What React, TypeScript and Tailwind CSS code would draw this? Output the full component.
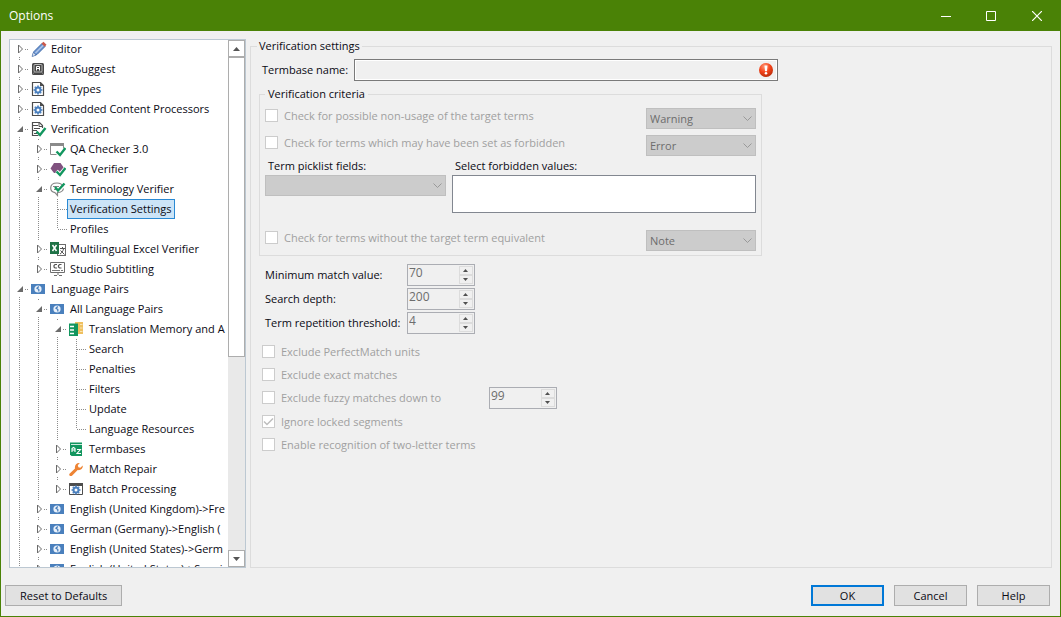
import { useState } from "react";
import type { ReactNode } from "react";

type IconName =
  | "pencil"
  | "key"
  | "file"
  | "verify"
  | "qa"
  | "tag"
  | "term"
  | "excel"
  | "cc"
  | "lang"
  | "memory"
  | "termbase"
  | "wrench"
  | "batch";

interface TreeRow {
  id: string;
  label: string;
  depth: number;
  icon?: IconName;
  state?: "open" | "closed";
  first?: boolean;
  last?: boolean;
}

const TREE: TreeRow[] = [
  { id: "editor", label: "Editor", depth: 0, icon: "pencil", state: "closed", first: true },
  { id: "autosuggest", label: "AutoSuggest", depth: 0, icon: "key", state: "closed" },
  { id: "filetypes", label: "File Types", depth: 0, icon: "file", state: "closed" },
  { id: "embedded", label: "Embedded Content Processors", depth: 0, icon: "file", state: "closed" },
  { id: "verification", label: "Verification", depth: 0, icon: "verify", state: "open" },
  { id: "qa", label: "QA Checker 3.0", depth: 1, icon: "qa", state: "closed" },
  { id: "tag", label: "Tag Verifier", depth: 1, icon: "tag", state: "closed" },
  { id: "terminology", label: "Terminology Verifier", depth: 1, icon: "term", state: "open" },
  { id: "settings", label: "Verification Settings", depth: 2 },
  { id: "profiles", label: "Profiles", depth: 2, last: true },
  { id: "excel", label: "Multilingual Excel Verifier", depth: 1, icon: "excel", state: "closed" },
  { id: "subtitling", label: "Studio Subtitling", depth: 1, icon: "cc", state: "closed", last: true },
  { id: "pairs", label: "Language Pairs", depth: 0, icon: "lang", state: "open" },
  { id: "allpairs", label: "All Language Pairs", depth: 1, icon: "lang", state: "open" },
  { id: "memory", label: "Translation Memory and A", depth: 2, icon: "memory", state: "open" },
  { id: "search", label: "Search", depth: 3 },
  { id: "penalties", label: "Penalties", depth: 3 },
  { id: "filters", label: "Filters", depth: 3 },
  { id: "update", label: "Update", depth: 3 },
  { id: "resources", label: "Language Resources", depth: 3, last: true },
  { id: "termbases", label: "Termbases", depth: 2, icon: "termbase", state: "closed" },
  { id: "repair", label: "Match Repair", depth: 2, icon: "wrench", state: "closed" },
  { id: "batch", label: "Batch Processing", depth: 2, icon: "batch", state: "closed", last: true },
  { id: "en-fr", label: "English (United Kingdom)->Fre", depth: 1, icon: "lang", state: "closed" },
  { id: "de-en", label: "German (Germany)->English (", depth: 1, icon: "lang", state: "closed" },
  { id: "en-de", label: "English (United States)->Germ", depth: 1, icon: "lang", state: "closed" },
  { id: "en-es", label: "English (United States)->Spani", depth: 1, icon: "lang", state: "closed" },
];

function Gear({ cx, cy }: { cx: number; cy: number }) {
  return (
    <g transform={`translate(${cx} ${cy})`} stroke="#4a7fbd">
      <circle r="2.5" fill="none" strokeWidth="2" />
      <path
        d="M0-3V-4.500M0 3V4.500M-3 0H-4.500M3 0H4.500M-2.200-2.200L-3.200-3.200M2.200 2.200L3.200 3.200M-2.200 2.200L-3.200 3.200M2.200-2.200L3.200-3.200"
        strokeWidth="1.600"
      />
    </g>
  );
}

function Tick() {
  return <path d="M6.500 10.500l3.500 3.500 5.500-7" fill="none" stroke="#12965f" strokeWidth="2.400" />;
}

const ICONS: Record<IconName, ReactNode> = {
  pencil: (
    <>
      <path d="M1.500 15L3 10.500 11 2.500l3 3L6 13.500z" fill="#6f97d2" stroke="#3f6aa8" />
      <path d="M4.500 12L12.500 4" stroke="#dbe7f7" />
      <path d="M10.500 2.500L12.500 .8l3 3-1.800 2z" fill="#c9594c" />
      <path d="M1 15.500l1.300-4 2.700 2.700z" fill="#e9edf5" stroke="#3f6aa8" strokeWidth=".6" />
    </>
  ),
  key: (
    <>
      <rect x="1" y="2" width="12" height="12" rx="1.500" fill="#474747" />
      <rect x="3" y="3.500" width="8" height="7.500" rx="1" fill="#474747" stroke="#d5d5d5" strokeWidth=".8" />
      <path d="M5.500 9.500V5.500h3v4M5.500 7.500h3" fill="none" stroke="#fff" />
      <path d="M1.500 13.500l2-2.500M12.500 13.500l-2-2.500" stroke="#999" strokeWidth=".8" />
    </>
  ),
  file: (
    <>
      <path d="M1.500 1.500h8l3 3v10h-11z" fill="#fff" stroke="#4d4d4d" strokeWidth="1.200" />
      <path d="M9 1v4h4z" fill="#4d4d4d" />
      <Gear cx={7} cy={9} />
    </>
  ),
  verify: (
    <>
      <path d="M11.500 7V4.500L8.500 1.500h-7v13h6" fill="#fff" stroke="#4d4d4d" strokeWidth="1.200" />
      <path d="M8 1.500v4h3.500" fill="none" stroke="#4d4d4d" />
      <path d="M1 4.500h6M3 7.500h6M1 9.500h5M3 12.500h3" stroke="#4d4d4d" />
      <path d="M5.500 10.500l3.500 3.500 5.500-7" fill="none" stroke="#12965f" strokeWidth="2.400" />
    </>
  ),
  qa: (
    <>
      <path d="M.5 4.500v9h6M13.500 4.500v3" fill="none" stroke="#8a8a8a" />
      <rect x="0" y="2" width="14" height="3" fill="#8a8a8a" />
      <Tick />
    </>
  ),
  tag: (
    <>
      <path d="M4 2h6.500l3.500 5-2.500 5H4L.5 7.500z" fill="#80527f" />
      <path d="M6.500 10l3.500 3.500 5-6" fill="none" stroke="#fff" strokeWidth="3.600" />
      <Tick />
    </>
  ),
  term: (
    <>
      <path
        d="M13 5.500C12 3 9.500 2 7 2 3.200 2 .7 4 .7 7c0 2.500 2 4.200 4.300 4.700L7.500 14.500v-3c3 0 5.500-1.500 6-4"
        fill="none"
        stroke="#858585"
        strokeWidth="1.200"
      />
      <path d="M3 5.500h6M4 8.500h3" stroke="#858585" />
      <path d="M5 6l3 3.500 6.500-7" fill="none" stroke="#12965f" strokeWidth="2.400" />
    </>
  ),
  excel: (
    <>
      <rect x="7.500" y="3.500" width="8" height="11" fill="#fff" stroke="#6b6b6b" />
      <path d="M10 7.500h5M12.500 6V7.500M10 13c2-1 3-3 3.500-5M10.500 9.500l4 4" fill="none" stroke="#555" />
      <path d="M0 1h9v12H0z" fill="#1f7246" />
      <path d="M2.500 4l4 6M6.500 4l-4 6" stroke="#fff" strokeWidth="1.500" />
    </>
  ),
  cc: (
    <>
      <path d="M.5 1.500h14v10H.5z" fill="#fff" stroke="#6e6e6e" />
      <path d="M7 3.500H5l-1 1v1.500l1 1h2M11.500 3.500h-2l-1 1v1.500l1 1h2" fill="none" stroke="#555" strokeWidth="1.200" />
      <path d="M2 9.500h8M11 9.500h2" stroke="#777" />
      <path d="M4 14.500h3M9 14.500h3M7 13h2" stroke="#6e6e6e" />
    </>
  ),
  lang: (
    <>
      <rect x="0" y="3" width="14" height="10" fill="#4a80bd" />
      <circle cx="7" cy="8" r="3.600" fill="#e8f0fa" />
      <path d="M7.800 5.500L6 7.200l1.800 1.300v2" fill="none" stroke="#4a80bd" strokeWidth="1.300" />
    </>
  ),
  memory: (
    <>
      <path d="M6 1h8v12H6z" fill="#efc060" />
      <path d="M11 3.500h2.500M11 7h2.500M11 10.500h2.500" stroke="#f9e5b5" />
      <path d="M0 2.500h9V15H0z" fill="#12965f" />
      <path d="M1 5.500h4M1 9h4M1 12.500h4" stroke="#fff" strokeWidth="1.400" />
    </>
  ),
  termbase: (
    <>
      <path d="M1 1.500h12V15H2.500L1 13.500z" fill="#12965f" />
      <path d="M2 3.500h11" stroke="#fff" strokeWidth=".8" />
      <path d="M3 11V7.500l1.500-1L6 7.500V11M3 9h3M8 8.500h3.500L8 12.500h4" fill="none" stroke="#fff" strokeWidth="1.100" />
    </>
  ),
  wrench: (
    <path
      d="M.5 12.800L6 7.500C5.300 4.500 7.500 1.500 10.800 2L8.800 4.200l.6 2 2 .5L13.700 4.500c.6 3-2 5.200-5 4.600L3 14.800c-1.500 1-3.500-.5-2.500-2z"
      fill="#ee8434"
    />
  ),
  batch: (
    <>
      <path d="M.5 2.500h13v11H.5z" fill="#fff" stroke="#4d4d4d" />
      <path d="M0 2h14v3H0z" fill="#4d4d4d" />
      <Gear cx={7} cy={9} />
    </>
  ),
};

function TreeIcon({ name }: { name: IconName }) {
  return (
    <svg width="16" height="16" viewBox="0 0 16 16" aria-hidden="true" className="ml-0.5 mr-1 shrink-0">
      {ICONS[name]}
    </svg>
  );
}

function Branch({ row }: { row: TreeRow }) {
  const gap = row.state ? 8 : 0;
  return (
    <svg
      width="19"
      height="20"
      viewBox="0 0 19 20"
      fill="none"
      stroke="#8c8c8c"
      strokeDasharray="1 1"
      aria-hidden="true"
      className="shrink-0"
    >
      {!row.first && <path d={`M9.500 0V${10 - gap}`} />}
      {!row.last && <path d={`M9.500 ${10 + gap}V20`} />}
      <path d={row.state ? "M15 10.500H19" : "M10 10.500H19"} />
      {row.state === "closed" && <path d="M8.500 6v8l4-4z" stroke="#6b6b6b" strokeDasharray="none" fill="#fff" />}
      {row.state === "open" && <path d="M13 7v6H7z" stroke="none" fill="#6b6b6b" />}
    </svg>
  );
}

function Guide() {
  return (
    <span className="flex w-[19px] shrink-0 justify-center">
      <span className="w-px bg-[repeating-linear-gradient(#8c8c8c_0_1px,transparent_1px_2px)]" />
    </span>
  );
}

function Tree() {
  const [selected, setSelected] = useState("settings");

  return (
    <div className="flex w-[237px] shrink-0 border border-[#bcc8d2] bg-white">
      <ul role="tree" aria-label="Options" className="-mt-px min-w-0 flex-1 overflow-hidden">
        {TREE.map((row) => (
          <li
            key={row.id}
            role="treeitem"
            aria-level={row.depth + 1}
            aria-selected={row.id === selected}
            aria-expanded={row.state ? row.state === "open" : undefined}
            className="flex h-5"
          >
            {Array.from({ length: row.depth }, (_, i) => (
              <Guide key={i} />
            ))}
            <Branch row={row} />
            <button
              type="button"
              onClick={() => setSelected(row.id)}
              className="flex items-center whitespace-nowrap leading-4"
            >
              {row.icon && <TreeIcon name={row.icon} />}
              <span
                className={
                  row.id === selected ? "border border-[#2a8ad4] bg-[#cce4f7] px-0.5 py-px" : row.icon ? "" : "px-[3px]"
                }
              >
                {row.label}
              </span>
            </button>
          </li>
        ))}
      </ul>
      <div className="flex w-[17px] shrink-0 flex-col bg-[#e9e9e9]">
        <ScrollButton label="Scroll up" path="M0 4L3.500 0 7 4z" />
        <div className="h-[57%] border border-[#adadad] bg-white" />
        <div className="flex-1" />
        <ScrollButton label="Scroll down" path="M0 0h7L3.500 4z" />
      </div>
    </div>
  );
}

function ScrollButton({ label, path }: { label: string; path: string }) {
  return (
    <button
      type="button"
      aria-label={label}
      className="flex h-[17px] shrink-0 items-center justify-center border border-[#adadad] bg-white"
    >
      <svg width="7" height="4" viewBox="0 0 7 4" aria-hidden="true">
        <path d={path} fill="#555" />
      </svg>
    </button>
  );
}

function Check({ label, checked }: { label: string; checked?: boolean }) {
  return (
    <label className="flex items-center gap-1.5 text-[#a0a0a0]">
      <span className="relative flex">
        <input
          type="checkbox"
          disabled
          defaultChecked={checked}
          className="size-[13px] appearance-none border border-[#cccccc] bg-white"
        />
        {checked && (
          <svg width="13" height="13" viewBox="0 0 13 13" fill="none" aria-hidden="true" className="absolute inset-0">
            <path d="M2 6.500l3 3L11 3.500" stroke="#bdbdbd" strokeWidth="1.500" />
          </svg>
        )}
      </span>
      {label}
    </label>
  );
}

function Dropdown({ label, id, value }: { label?: string; id?: string; value?: string }) {
  return (
    <div className="relative w-full">
      <select
        id={id}
        aria-label={label}
        disabled
        className="block h-[21px] w-full appearance-none border border-[#bfbfbf] bg-[#cccccc] px-[3px] leading-4 text-[#6d6d6d] opacity-100"
      >
        {value && <option>{value}</option>}
      </select>
      <svg
        width="9"
        height="5"
        viewBox="0 0 9 5"
        fill="none"
        aria-hidden="true"
        className="pointer-events-none absolute right-1 top-2"
      >
        <path d="M.5 .5l4 4 4-4" stroke="#999" />
      </svg>
    </div>
  );
}

function Severity({ label, value }: { label: string; value: string }) {
  return (
    <div className="flex h-[21px] items-start justify-between">
      <Check label={label} />
      <div className="flex w-[110px]">
        <Dropdown label={`${label}: severity`} value={value} />
      </div>
    </div>
  );
}

function Spinner({ id, label, value }: { id?: string; label?: string; value: string }) {
  return (
    <div className="flex h-[22px] w-[68px] border border-[#abadb3] p-px">
      <input
        id={id}
        aria-label={label}
        disabled
        defaultValue={value}
        className="h-3.5 min-w-0 flex-1 bg-transparent text-xs leading-[14px] text-[#6d6d6d]"
      />
      <div className="flex w-3.5 flex-col">
        <button type="button" disabled aria-label="Increase" className="flex flex-1 items-center justify-center border border-[#dcdcdc]">
          <svg width="6" height="3" viewBox="0 0 6 3" aria-hidden="true">
            <path d="M0 3L2.500 0 5 3z" fill="#505050" />
          </svg>
        </button>
        <button type="button" disabled aria-label="Decrease" className="flex flex-1 items-center justify-center border border-[#dcdcdc]">
          <svg width="6" height="3" viewBox="0 0 6 3" aria-hidden="true">
            <path d="M0 0h5L2.500 3z" fill="#505050" />
          </svg>
        </button>
      </div>
    </div>
  );
}

function NumberRow({ id, label, value }: { id: string; label: string; value: string }) {
  return (
    <div className="flex items-center">
      <label htmlFor={id} className="w-[142px] pb-0.5">
        {label}
      </label>
      <Spinner id={id} value={value} />
    </div>
  );
}

function VerificationSettings() {
  return (
    <fieldset className="min-w-0 flex-1 border border-[#dcdcdc] px-1.5">
      <legend className="px-0.5 leading-[14px]">Verification settings</legend>

      <div className="flex items-center pl-[5px] pt-1.5">
        <label htmlFor="termbase" className="w-[92px] pb-0.5">
          Termbase name:
        </label>
        <div className="flex h-[22px] w-[424px] items-center border border-[#7a7a7a] pr-1 ring-1 ring-inset ring-white">
          <input id="termbase" readOnly className="h-4 min-w-0 flex-1 bg-transparent px-1" />
          <svg width="14" height="14" viewBox="0 0 14 14" role="img" aria-label="Termbase is required">
            <defs>
              <radialGradient id="err" cx=".4" cy=".25" r=".8">
                <stop offset="0" stopColor="#ff9a7a" />
                <stop offset=".5" stopColor="#f4431a" />
                <stop offset="1" stopColor="#b52a08" />
              </radialGradient>
            </defs>
            <circle cx="7" cy="7" r="7" fill="url(#err)" />
            <path d="M5.500 2.500h3L8 8.200H6z" fill="#fff" />
            <circle cx="7" cy="10.300" r="1.300" fill="#fff" />
          </svg>
        </div>
      </div>

      <fieldset className="ml-0.5 mt-1.5 w-[503px] border border-[#dcdcdc] px-[5px] pb-1">
        <legend className="px-[3px] leading-[14px]">Verification criteria</legend>
        <div className="flex flex-col gap-1.5 pt-[7px]">
          <Severity label="Check for possible non-usage of the target terms" value="Warning" />
          <Severity label="Check for terms which may have been set as forbidden" value="Error" />
        </div>
        <div className="mt-0.5 flex gap-1.5">
          <div className="flex w-[181px] flex-col gap-0.5">
            <label htmlFor="picklist" className="pl-[3px]">
              Term picklist fields:
            </label>
            <Dropdown id="picklist" />
          </div>
          <div className="flex flex-1 flex-col gap-0.5">
            <label htmlFor="forbidden" className="pl-[3px]">
              Select forbidden values:
            </label>
            <select id="forbidden" multiple className="h-[38px] appearance-none border border-[#828790] bg-white" />
          </div>
        </div>
        <div className="mt-[17px]">
          <Severity label="Check for terms without the target term equivalent" value="Note" />
        </div>
      </fieldset>

      <div className="mt-2 flex flex-col gap-0.5 pl-2">
        <NumberRow id="min-match" label="Minimum match value:" value="70" />
        <NumberRow id="depth" label="Search depth:" value="200" />
        <NumberRow id="threshold" label="Term repetition threshold:" value="4" />
      </div>

      <div className="mt-2.5 flex flex-col gap-2 pl-[5px]">
        <Check label="Exclude PerfectMatch units" />
        <Check label="Exclude exact matches" />
        <div className="flex h-4 items-center">
          <div className="w-[227px] pb-0.5">
            <Check label="Exclude fuzzy matches down to" />
          </div>
          <Spinner label="Exclude fuzzy matches down to" value="99" />
        </div>
        <Check label="Ignore locked segments" checked />
        <Check label="Enable recognition of two-letter terms" />
      </div>
    </fieldset>
  );
}

function DialogButton({ children, primary }: { children: ReactNode; primary?: boolean }) {
  return (
    <button
      type="button"
      className={`h-[21px] min-w-[73px] bg-[#e1e1e1] px-3.5 ${
        primary ? "border-2 border-[#0078d7]" : "border border-[#adadad]"
      }`}
    >
      {children}
    </button>
  );
}

function TitleBar() {
  return (
    <header className="flex h-[30px] shrink-0 items-center bg-[#4a8206] text-white">
      <h1 className="flex-1 pl-2 text-xs">Options</h1>
      <button type="button" aria-label="Minimize" className="flex h-full w-11 items-center justify-center">
        <svg width="10" height="10" viewBox="0 0 10 10" aria-hidden="true">
          <path d="M0 5.500h10" stroke="currentColor" />
        </svg>
      </button>
      <button type="button" aria-label="Maximize" className="flex h-full w-[46px] items-center justify-center">
        <svg width="10" height="10" viewBox="0 0 10 10" aria-hidden="true">
          <path d="M.5 .5h9v9h-9z" fill="none" stroke="currentColor" />
        </svg>
      </button>
      <button type="button" aria-label="Close" className="flex h-full w-[46px] items-center justify-center">
        <svg width="10" height="10" viewBox="0 0 10 10" aria-hidden="true">
          <path d="M0 0l10 10M10 0L0 10" stroke="currentColor" strokeWidth="1.200" />
        </svg>
      </button>
    </header>
  );
}

export default function App() {
  return (
    <div className="flex h-screen flex-col border border-[#4a8206] bg-[#f0f0f0] font-['Open_Sans','Noto_Sans',sans-serif] text-[11px] leading-[15px] text-[#0a0a14]">
      <TitleBar />
      <main className="flex min-h-0 flex-1 gap-1 px-2 pt-2">
        <Tree />
        <VerificationSettings />
      </main>
      <footer className="flex shrink-0 items-center gap-2.5 pb-2.5 pl-1 pr-2.5 pt-[17px]">
        <DialogButton>Reset to Defaults</DialogButton>
        <div className="flex-1" />
        <DialogButton primary>OK</DialogButton>
        <DialogButton>Cancel</DialogButton>
        <DialogButton>Help</DialogButton>
      </footer>
    </div>
  );
}
